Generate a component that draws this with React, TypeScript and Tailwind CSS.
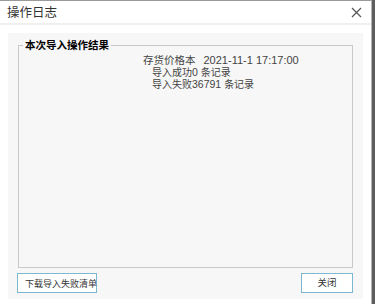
import React from "react";

const font = { fontFamily: '"Noto Sans CJK SC", "Liberation Sans", sans-serif' };
const num = { fontFamily: '"Liberation Sans", sans-serif' };

export default function App() {
  return (
    <div className="w-[375px] h-[304px] bg-[#5e5e5e] overflow-hidden" style={font}>
      <div className="w-[372px] h-[304px] bg-white border-t border-t-[#9a9a9a] border-r border-r-[#b4b4b4] flex flex-col">
        <div className="h-[24px] shrink-0 flex items-center justify-between pl-[7px] pr-[9px] border-b-2 border-b-[#efefef]">
          <span className="text-[12.5px] text-[#333] leading-none">操作日志</span>
          <svg width="11" height="11" viewBox="0 0 11 11" className="mt-[1px]">
            <path d="M1 1 L10 10 M10 1 L1 10" stroke="#555" strokeWidth="1.2" fill="none" />
          </svg>
        </div>
        <div className="h-[8px] shrink-0" />
        <div className="mx-[8px] h-[266px] shrink-0 bg-[#f7f7f7] flex flex-col px-[10px] pt-[5px]">
          <fieldset className="border border-[#c9c9c9] h-[230px] shrink-0 px-0">
            <legend className="ml-[4px] px-[2px] text-[10.5px] font-bold text-black leading-[14px]">本次导入操作结果</legend>
            <div className="flex flex-col text-[10px] text-[#444] mt-[2px]">
              <div className="h-[12px] flex items-center pl-[124px] leading-none">
                <span className="text-[10.5px]">存货价格本</span>
                <span className="ml-[8px] text-[11px]" style={num}>2021-11-1 17:17:00</span>
              </div>
              <div className="h-[12px] flex items-center pl-[133px] leading-none whitespace-pre">
                <span>导入成功</span>
                <span className="text-[10.5px]" style={num}>0 </span>
                <span>条记录</span>
              </div>
              <div className="h-[12px] flex items-center pl-[133px] leading-none whitespace-pre">
                <span>导入失败</span>
                <span className="text-[10.5px]" style={num}>36791 </span>
                <span>条记录</span>
              </div>
            </div>
          </fieldset>
          <div className="flex justify-between mt-[5px]">
            <button className="-ml-[1px] w-[80px] h-[20px] bg-white border border-[#7db8d3] text-[9px] text-[#333] leading-none whitespace-nowrap pl-[7px] pr-0 text-left">下载导入失败清单</button>
            <button className="w-[52px] h-[20px] bg-white border border-[#7db8d3] text-[9.5px] text-[#333] leading-none">关闭</button>
          </div>
        </div>
      </div>
    </div>
  );
}
